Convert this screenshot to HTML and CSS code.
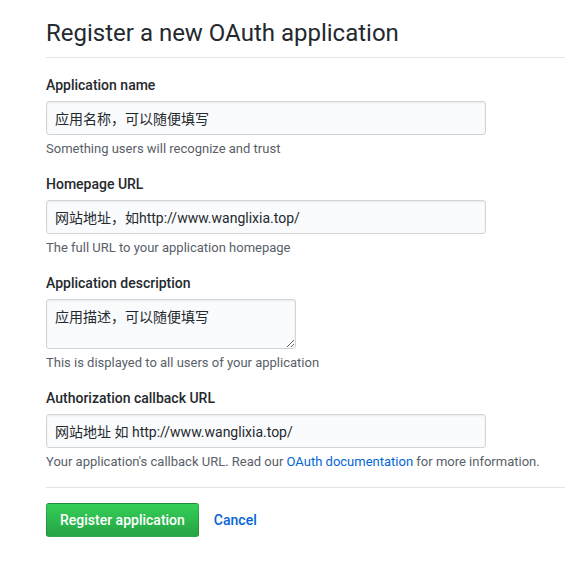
FILE: index.html
```html
<!DOCTYPE html>
<html lang="zh">
<head>
<meta charset="utf-8">
<title>Register a new OAuth application</title>
<link rel="stylesheet" href="styles.css">
</head>
<body>
<div class="page">
  <h2 class="subhead">Register a new OAuth application</h2>
  <form class="form">
    <div class="group">
      <label class="label">Application name</label>
      <input class="control" type="text" value="应用名称，可以随便填写">
      <p class="note">Something users will recognize and trust</p>
    </div>
    <div class="group">
      <label class="label">Homepage URL</label>
      <input class="control" type="text" value="网站地址，如http://www.wanglixia.top/">
      <p class="note">The full URL to your application homepage</p>
    </div>
    <div class="group">
      <label class="label">Application description</label>
      <textarea class="control area">应用描述，可以随便填写</textarea>
      <p class="note">This is displayed to all users of your application</p>
    </div>
    <div class="group">
      <label class="label">Authorization callback URL</label>
      <input class="control" type="text" value="网站地址 如 http://www.wanglixia.top/">
      <p class="note">Your application's callback URL. Read our <a class="link" href="#">OAuth documentation</a> for more information.</p>
    </div>
    <div class="actions">
      <button class="btn" type="button">Register application</button>
      <a class="cancel" href="#">Cancel</a>
    </div>
  </form>
</div>
</body>
</html>
```
FILE: styles.css
```css
html, body {
  margin: 0;
  padding: 0;
  background: #fff;
}
body {
  font-family: Roboto, "Noto Sans CJK SC", sans-serif;
  color: #24292e;
  font-size: 14px;
}
.page {
  padding-left: 46px;
  padding-top: 15px;
}
.subhead {
  margin: 0;
  font-size: 24px;
  font-weight: 400;
  line-height: 36px;
  padding-bottom: 6px;
  border-bottom: 1px solid #e1e4e8;
}
.form {
  padding-top: 17px;
}
.group {
  margin-bottom: 17px;
}
.label {
  display: block;
  font-weight: 500;
  font-size: 14px;
  line-height: 20px;
  margin-bottom: 6px;
}
.control {
  display: block;
  box-sizing: border-box;
  width: 440px;
  height: 34px;
  padding: 6px 8px;
  font-family: Roboto, "Noto Sans CJK SC", sans-serif;
  font-size: 14px;
  line-height: 20px;
  color: #24292e;
  background: #fafbfc;
  border: 1px solid #d1d5da;
  border-radius: 3px;
  box-shadow: inset 0 1px 2px rgba(27,31,35,0.075);
  margin: 0;
}
.area {
  width: 250px;
  height: 50px;
  padding-top: 7px;
  resize: both;
}
.note {
  margin: 6px 0 0;
  font-size: 13px;
  line-height: 16px;
  color: #586069;
  white-space: nowrap;
}
.link, .cancel {
  color: #0366d6;
  text-decoration: none;
}
.actions {
  border-top: 1px solid #e1e4e8;
  margin-top: 14px;
  padding-top: 15px;
  display: flex;
  align-items: center;
  gap: 15px;
}
.btn {
  height: 34px;
  padding: 0 13px;
  font-family: Roboto, sans-serif;
  font-size: 14px;
  font-weight: 500;
  color: #fff;
  background: linear-gradient(-180deg, #34d058 0%, #28a745 90%);
  border: 1px solid rgba(27,31,35,0.2);
  border-radius: 3px;
}
.cancel {
  font-weight: 500;
  font-size: 14px;
}
```
